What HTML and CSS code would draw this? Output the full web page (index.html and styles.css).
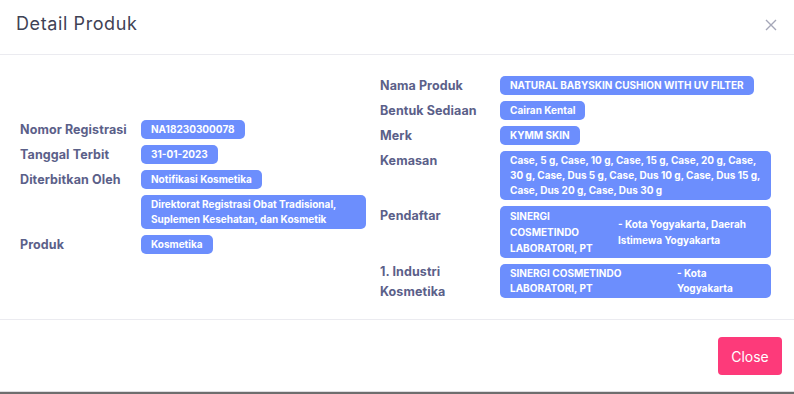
FILE: index.html
```html
<!DOCTYPE html>
<html lang="id">
<head>
    <meta charset="UTF-8">
    <meta name="viewport" content="width=device-width, initial-scale=1.0">
    <title>Detail Produk</title>
    <link rel="stylesheet" href="styles.css">
</head>
<body>
    <div class="modal">
        <div class="modal-header">
            <h5 class="modal-title">Detail Produk</h5>
            <button class="btn-x" aria-label="Close">
                <svg width="12" height="12" viewBox="0 0 12 12">
                    <path d="M1 1L11 11M11 1L1 11" stroke="#a5a7b8" stroke-width="1.4" fill="none"/>
                </svg>
            </button>
        </div>

        <div class="modal-body">
            <!-- data registrasi -->
            <div class="info-col info-left">
                <span class="info-label">Nomor Registrasi</span>
                <span class="badge">NA18230300078</span>

                <span class="info-label">Tanggal Terbit</span>
                <span class="badge">31-01-2023</span>

                <span class="info-label">Diterbitkan Oleh</span>
                <span class="badge">Notifikasi Kosmetika</span>

                <span class="info-label"></span>
                <span class="badge">Direktorat Registrasi Obat Tradisional, Suplemen Kesehatan, dan Kosmetik</span>

                <span class="info-label">Produk</span>
                <span class="badge">Kosmetika</span>
            </div>

            <!-- data produk -->
            <div class="info-col info-right">
                <span class="info-label">Nama Produk</span>
                <span class="badge">NATURAL BABYSKIN CUSHION WITH UV FILTER</span>

                <span class="info-label">Bentuk Sediaan</span>
                <span class="badge">Cairan Kental</span>

                <span class="info-label">Merk</span>
                <span class="badge">KYMM SKIN</span>

                <span class="info-label">Kemasan</span>
                <span class="badge badge-full">Case, 5 g, Case, 10 g, Case, 15 g, Case, 20 g, Case, 30 g, Case, Dus 5 g, Case, Dus 10 g, Case, Dus 15 g, Case, Dus 20 g, Case, Dus 30 g</span>

                <span class="info-label">Pendaftar</span>
                <div class="badge badge-full company company-reg">
                    <span class="company-name">SINERGI COSMETINDO LABORATORI, PT</span>
                    <span class="company-city">- Kota Yogyakarta, Daerah Istimewa Yogyakarta</span>
                </div>

                <span class="info-label info-label-wrap">1. Industri Kosmetika</span>
                <div class="badge badge-full company company-ind">
                    <span class="company-name">SINERGI COSMETINDO LABORATORI, PT</span>
                    <span class="company-city">- Kota Yogyakarta</span>
                </div>
            </div>
        </div>

        <div class="modal-footer">
            <button class="btn-close">Close</button>
        </div>
    </div>
</body>
</html>
```

FILE: styles.css
```css
body {
    margin: 0;
    padding: 0;
    background-color: #6e6e6e;
    font-family: Inter, "Open Sans", sans-serif;
}

.modal {
    background-color: #fff;
    border-bottom: 1px solid #dcdce0;
}

.modal-header {
    height: 55px;
    box-sizing: border-box;
    padding: 13px 17px 0 16px;
    display: flex;
    justify-content: space-between;
    align-items: flex-start;
    border-bottom: 1px solid #ebebf0;
}

.modal-title {
    margin: 0;
    font-size: 18px;
    line-height: 22px;
    font-weight: 400;
    letter-spacing: 0.6px;
    color: #3f4254;
}

.btn-x {
    border: none;
    background: none;
    padding: 0;
    margin-top: 6px;
    width: 12px;
    height: 12px;
    display: flex;
}

.modal-body {
    height: 264px;
    box-sizing: border-box;
    padding: 0 23px 0 20px;
    display: grid;
    grid-template-columns: 346px 1fr;
    column-gap: 14px;
    align-items: center;
}

.info-col {
    display: grid;
    row-gap: 6px;
    align-items: start;
    justify-items: start;
}

.info-left {
    grid-template-columns: 121px 225px;
}

.info-right {
    grid-template-columns: 120px 271px;
}

.info-label {
    padding-right: 6px;
    font-size: 12.5px;
    line-height: 19px;
    font-weight: 700;
    letter-spacing: 0.1px;
    color: #5b6089;
}

/* two-line label must not stretch its row */
.info-label-wrap {
    line-height: 20px;
    margin-top: -2px;
    margin-bottom: -6px;
}

.badge {
    display: block;
    box-sizing: border-box;
    max-width: 100%;
    padding: 2px 10px;
    border-radius: 5px;
    background-color: #6c8efd;
    color: #fff;
    font-size: 10px;
    line-height: 15px;
    font-weight: 700;
}

.badge-full {
    width: 100%;
}

.company {
    display: grid;
    column-gap: 8px;
    align-items: center;
}

.company-reg {
    grid-template-columns: 100px 1fr;
    line-height: 16px;
}

.company-ind {
    grid-template-columns: 159px 1fr;
}

.modal-footer {
    border-top: 1px solid #ebebf0;
    padding: 17px 12px 16px;
    display: flex;
    justify-content: flex-end;
}

.btn-close {
    width: 64px;
    height: 38px;
    border: none;
    border-radius: 4px;
    background-color: #fd3a7a;
    color: #fff;
    font-family: Inter, "Open Sans", sans-serif;
    font-size: 14px;
}
```
